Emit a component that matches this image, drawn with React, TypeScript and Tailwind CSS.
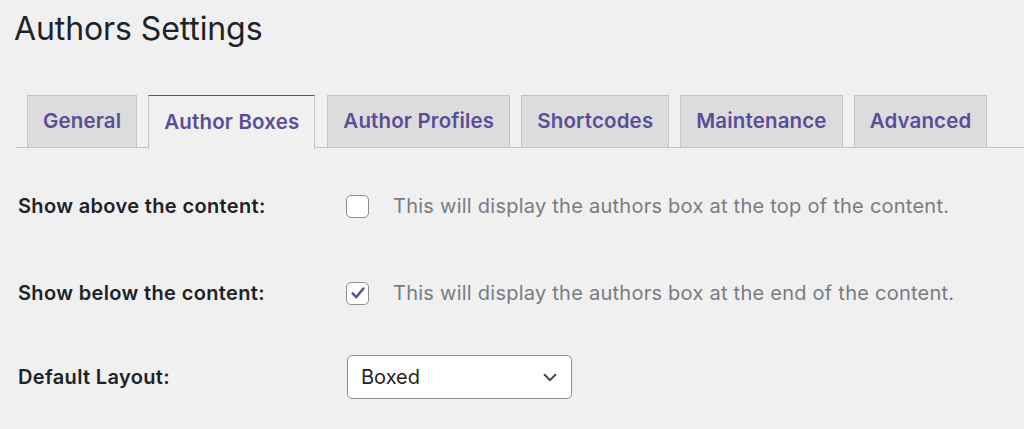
import React from 'react';

const tabs = ['General', 'Author Boxes', 'Author Profiles', 'Shortcodes', 'Maintenance', 'Advanced'];

const Checkbox = ({ checked }: { checked?: boolean }) => (
  <span className="flex h-[23px] w-[23px] items-center justify-center rounded-[5px] border-[1.5px] border-[#8c8f94] bg-white">
    {checked && (
      <svg width="18" height="18" viewBox="0 0 20 20">
        <path d="M4 10.5l4 4.2L16 5" fill="none" stroke="#5b4e96" strokeWidth="2.8" strokeLinecap="round" strokeLinejoin="round" />
      </svg>
    )}
  </span>
);

export default function App() {
  const active = 'Author Boxes';

  return (
    <div className="h-[429px] w-[1024px] overflow-hidden bg-[#f0f0f1] font-['Inter',sans-serif] text-[#1d2327]">
      <h1 className="pl-[14px] pt-[9px] text-[32px] leading-[40px] font-normal tracking-[-0.1px]">Authors Settings</h1>

      {/* tab strip */}
      <div className="ml-[16px] mt-[46px] flex border-b-[1.5px] border-[#c3c4c7] pl-[11px]">
        {tabs.map((t) => (
          <div
            key={t}
            className={
              t === active
                ? 'mr-[12px] -mb-[1.5px] flex h-[53.5px] items-center border-[1.5px] border-b-0 border-[#c3c4c7] border-t-[#5b4e96] bg-[#f0f0f1] px-[15px] text-[20.5px] font-semibold tracking-[0.15px] text-[#5b4e96]'
                : 'mr-[11px] flex h-[52px] items-center border-[1.5px] border-b-0 border-[#c3c4c7] bg-[#dcdcde] px-[15px] text-[20.5px] font-semibold tracking-[0.15px] text-[#5b4e96]'
            }
          >
            {t}
          </div>
        ))}
      </div>

      {/* settings rows */}
      <div className="pl-[18px] pt-[40px] text-[20px]">
        <div className="flex h-[36px] items-center">
          <div className="w-[328px] font-semibold tracking-[0.35px]">Show above the content:</div>
          <Checkbox />
          <span className="ml-[24px] tracking-[0.25px] text-[#787c82]">This will display the authors box at the top of the content.</span>
        </div>
        <div className="mt-[51px] flex h-[36px] items-center">
          <div className="w-[328px] font-semibold tracking-[0.35px]">Show below the content:</div>
          <Checkbox checked />
          <span className="ml-[24px] tracking-[0.25px] text-[#787c82]">This will display the authors box at the end of the content.</span>
        </div>
        <div className="mt-[44px] flex h-[44px] items-center">
          <div className="w-[329px] font-semibold tracking-[0.35px]">Default Layout:</div>
          <div className="flex h-[44px] w-[225px] items-center justify-between rounded-[5px] border-[1.5px] border-[#8c8f94] bg-white pl-[13px] pr-[12px] text-[20px]">
            <span>Boxed</span>
            <svg width="18" height="18" viewBox="0 0 20 20">
              <path d="M4 7.5l6 6 6-6" fill="none" stroke="#3c434a" strokeWidth="2.2" strokeLinecap="round" strokeLinejoin="round" />
            </svg>
          </div>
        </div>
      </div>
    </div>
  );
}
